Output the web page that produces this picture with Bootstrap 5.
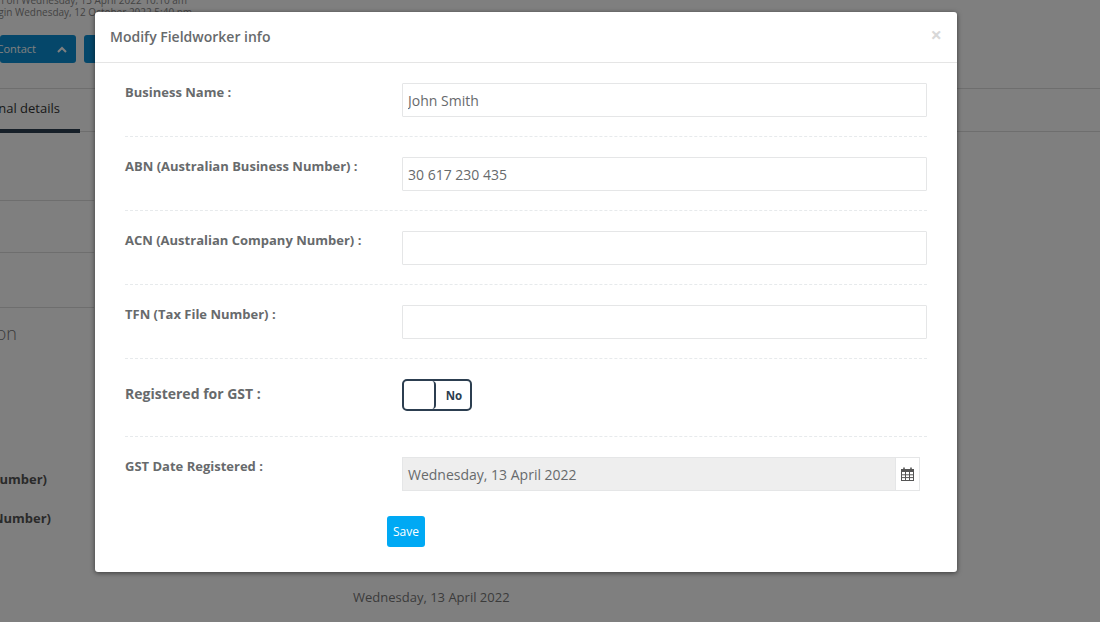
<!DOCTYPE html>
<html lang="en">
<head>
<meta charset="utf-8">
<title>Modify Fieldworker info</title>
<link href="https://cdn.jsdelivr.net/npm/bootstrap@5.3.0/dist/css/bootstrap.min.css" rel="stylesheet">
<style>
html,body{height:622px;overflow:hidden}
body{font-family:"Open Sans",sans-serif;background:#fff;color:#666;position:relative}
.under-page{height:622px;overflow:hidden;color:#333}
.login-lines{font-size:10px;line-height:12px;color:#888;margin-top:-6px;height:41px;white-space:nowrap}
.login-a{margin-left:-44px}
.login-b{margin-left:-32px}
.under-btns{gap:8px;height:28px;margin-bottom:25px}
.under-btn{background:#0b8fd4;border-radius:3px;color:#fff;font-size:11px;height:28px;display:flex;align-items:center;white-space:nowrap;overflow:hidden}
.under-btn-a{width:76px;justify-content:flex-end;gap:21px;padding-right:9px}
.under-btn-a span,.under-btn-a svg{flex:none}
.under-btn-b{width:60px}
.tabs-row{height:44px;border-top:1px solid #ddd;border-bottom:1px solid #ddd}
.tab-on{width:80px;height:44px;border-bottom:4px solid #2c3e50;line-height:39px;white-space:nowrap;overflow:hidden;display:flex;justify-content:flex-end;padding-right:20px;font-size:13px;color:#333}
.rule-line{border-bottom:1px solid #ddd;width:94px}
.rule-1{height:69px}.rule-2{height:52px}.rule-3{height:55px}
.section-frag{font-size:18px;font-weight:300;color:#777;width:17px;overflow:hidden;margin-top:13px;height:26px;line-height:24px}
.bold-frag{font-size:13px;font-weight:700;color:#555;white-space:nowrap;display:flex;justify-content:flex-end;overflow:hidden;height:18px;line-height:18px}
.bold-a{margin-top:123px;width:47px}.bold-b{margin-top:21px;width:51px}
.date-under{font-size:13px;color:#777;margin-top:61px;margin-left:353px;line-height:18px}
.veil{position:absolute;inset:0;background:#000;opacity:.5}
.dlg{position:absolute;left:95px;top:12px;width:862px;height:560px;background:#fff;border-radius:3px;border:0;box-shadow:0 1px 5px rgba(0,0,0,.55)}
.dlg-head{height:51px;border-bottom:1px solid #e5e5e5;padding:0 15px;display:flex;align-items:center;justify-content:space-between}
.dlg-title{font-size:14px;font-weight:600;color:#676a6c;margin:-1px 0 0;line-height:20px}
.dlg-x{font-size:20px;font-weight:700;color:#d8d8d8;line-height:1;border:0;background:none;padding:0;margin:-5px 0 0 0}
.dlg-body{padding:20px 30px 0}
.fld{display:flex;align-items:flex-start;height:54px;border-bottom:1px dashed #e7eaec;margin-bottom:20px;width:802px}
.fld-label{width:277px;flex:none;font-size:13px;font-weight:700;color:#676a6c;margin:0;line-height:18px;padding-top:0}
.fld-input{width:525px;height:34px;flex:none;border:1px solid #e5e6e7;border-radius:1px;font-size:14px;color:#676a6c;padding:6px 5px;line-height:20px;box-shadow:none}
.fld-gst{height:58px}
.lbl-gst{font-size:14px;line-height:20px;padding-top:5px}
.toggle-box{width:70px;height:32px;border:2px solid #2c3e50;border-radius:5px;display:flex;overflow:hidden}
.toggle-knob{width:32px;border-right:2px solid #2c3e50;border-radius:4px;flex:none}
.toggle-txt{flex:1;display:flex;align-items:center;justify-content:center;font-size:11.5px;font-weight:700;color:#2c3e50;line-height:1;padding:1px 0 0 2px}
.date-row{width:518px;height:34px;display:flex;border:1px solid #e5e6e7;flex:none}
.date-val{flex:1;background:#eee;font-size:14px;color:#676a6c;padding:7px 5px 5px;line-height:20px}
.date-ico{width:24px;display:flex;align-items:center;justify-content:center;flex:none;border-left:1px solid #e5e6e7}
.fld-last{height:59px;border-bottom:0;margin-bottom:0}
.save-btn{display:block;margin-left:262px;width:38px;height:31px;padding:0;background:#00a9f4;border:0;border-radius:3px;color:#fff;font-size:12px;font-weight:400;line-height:31px}
</style>
</head>
<body>
<div class="under-page">
  <div class="login-lines">
    <div class="login-a">Last logon on Wednesday, 13 April 2022 10:10 am</div>
    <div class="login-b">Last login Wednesday, 12 October 2022 5:40 pm</div>
  </div>
  <div class="d-flex under-btns">
    <div class="under-btn under-btn-a"><span>Contact</span><svg width="10" height="7" viewBox="0 0 10 7"><path d="M1 6l4-4 4 4" fill="none" stroke="#fff" stroke-width="2"/></svg></div>
    <div class="under-btn under-btn-b"></div>
  </div>
  <div class="tabs-row"><div class="tab-on"><span>Personal details</span></div></div>
  <div class="rule-line rule-1"></div>
  <div class="rule-line rule-2"></div>
  <div class="rule-line rule-3"></div>
  <div class="section-frag d-flex justify-content-end"><span>Information</span></div>
  <div class="bold-frag bold-a"><span>Number)</span></div>
  <div class="bold-frag bold-b"><span>Number)</span></div>
  <div class="date-under">Wednesday, 13 April 2022</div>
</div>
<div class="veil"></div>
<div class="dlg modal-content">
  <div class="dlg-head">
    <h5 class="dlg-title">Modify Fieldworker info</h5>
    <button type="button" class="dlg-x">×</button>
  </div>
  <div class="dlg-body">
    <div class="fld"><label class="fld-label">Business Name :</label><input class="form-control fld-input" value="John Smith"></div>
    <div class="fld"><label class="fld-label">ABN (Australian Business Number) :</label><input class="form-control fld-input" value="30 617 230 435"></div>
    <div class="fld"><label class="fld-label">ACN (Australian Company Number) :</label><input class="form-control fld-input"></div>
    <div class="fld"><label class="fld-label">TFN (Tax File Number) :</label><input class="form-control fld-input"></div>
    <div class="fld fld-gst"><label class="fld-label lbl-gst">Registered for GST :</label><div class="toggle-box"><div class="toggle-knob"></div><div class="toggle-txt">No</div></div></div>
    <div class="fld fld-last"><label class="fld-label">GST Date Registered :</label>
      <div class="date-row"><div class="date-val">Wednesday, 13 April 2022</div><div class="date-ico"><svg width="13" height="14" viewBox="0 0 13 14"><rect x=".5" y="2.5" width="12" height="11" fill="none" stroke="#555"/><rect x="0" y="2" width="13" height="3" fill="#555"/><path d="M3 0.5v3M10 0.5v3" stroke="#555" stroke-width="1.6"/><path d="M4.5 5v8M8.5 5v8M1 7.8h11M1 10.6h11" stroke="#555" stroke-width="1"/></svg></div></div>
    </div>
    <button type="button" class="btn save-btn">Save</button>
  </div>
</div>
<script src="https://cdn.jsdelivr.net/npm/bootstrap@5.3.0/dist/js/bootstrap.bundle.min.js"></script>
</body>
</html>
